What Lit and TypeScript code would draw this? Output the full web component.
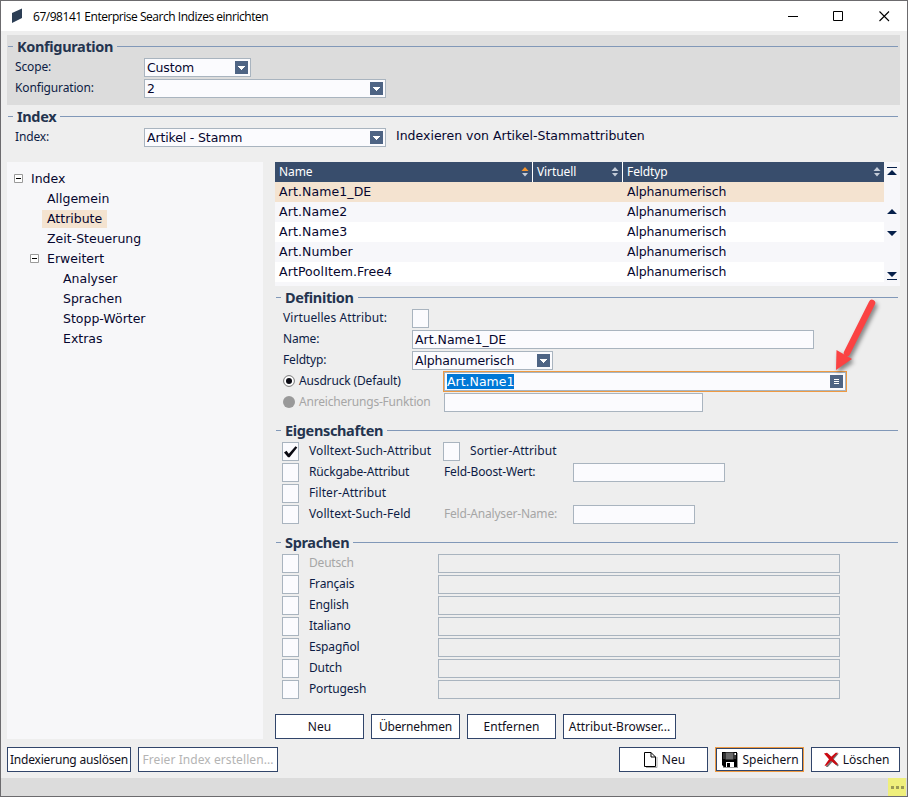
import { LitElement, html, css, svg, nothing } from "lit";
import { customElement, property } from "lit/decorators.js";
import { classMap } from "lit/directives/class-map.js";

const shared = css`
  * { box-sizing: border-box; }
  .label {
    font: 12px/19px "Noto Sans", "Open Sans", sans-serif;
    color: #0d1c45;
    white-space: nowrap;
    letter-spacing: -0.15px;
  }
  .loose { letter-spacing: 0.08px; }
  .off { color: #a6a6a6; letter-spacing: -0.2px; }
  .value {
    font: 12.5px/17px "DejaVu Sans", Verdana, sans-serif;
    color: #06062e;
    white-space: nowrap;
  }
`;

@customElement("group-heading")
class GroupHeading extends LitElement {
  @property() text = "";
  static styles = css`
    :host {
      display: flex;
      align-items: center;
      height: 23px;
      padding: 0 2px 0 1px;
      font: bold 14.5px/20px "Noto Sans", "Open Sans", sans-serif;
      letter-spacing: -0.35px;
      color: #24344f;
      white-space: nowrap;
    }
    .name { height: 20px; margin-bottom: 2px; }
    .dash { width: 5px; height: 1px; background: #8198b8; margin-right: 4px; }
    .rule { flex: 1; height: 1px; background: #8198b8; margin-left: 4px; }
  `;
  render() {
    return html`<span class="dash"></span><span class="name">${this.text}</span><span class="rule"></span>`;
  }
}

@customElement("check-box")
class CheckBox extends LitElement {
  @property({ type: Boolean }) checked = false;
  static styles = css`
    :host { display: block; box-sizing: border-box; width: 17px; height: 19px; border: 1px solid #a9b4bf; background: #fbfbfe; }
    svg { display: block; }
  `;
  render() {
    return this.checked
      ? html`<svg width="15" height="17" viewBox="0 0 15 17"><path d="M1 9.500 L3.500 7.800 L5.800 10.800 L12.500 3.200 L14.300 4.400 L6.600 14.200 L5 14.200 Z" fill="#0a0a12" /></svg>`
      : nothing;
  }
}

@customElement("text-field")
class TextField extends LitElement {
  @property() value = "";
  @property() icon = "";
  @property({ type: Boolean }) selected = false;
  static styles = [
    shared,
    css`
      :host {
        display: flex;
        box-sizing: border-box;
        height: 19px;
        border: 1px solid #a9b4bf;
        background: #fbfbfe;
        align-items: center;
        justify-content: space-between;
        padding: 0 2px;
      }
      :host([flat]) { background: #eee; }
      :host([focused]) { outline: 1px solid #ee9a42; }
      :host([icon="down"]) .value { letter-spacing: -0.14px; }
      .value { height: 17px; }
      .selected { background: #0078d7; color: #fff; line-height: 15px; height: 15px; }
      .knob { width: 13px; height: 13px; background: #4e6484; display: block; flex: none; }
    `,
  ];
  render() {
    const glyph =
      this.icon === "down"
        ? svg`<path d="M3 5h7v1h-1v1h-1v1h-1v1h-1v-1h-1v-1h-1v-1h-1z" fill="#fff" />`
        : svg`<path d="M4 4h5v1h-5zM4 6h5v1h-5zM4 8h5v1h-5z" fill="#fff" />`;
    return html`<span class=${classMap({ value: true, selected: this.selected })}>${this.value}</span>
      ${this.icon ? html`<svg class="knob" viewBox="0 0 13 13">${glyph}</svg>` : nothing}`;
  }
}

@customElement("push-button")
class PushButton extends LitElement {
  @property() icon = "";
  static styles = css`
    :host {
      display: flex;
      box-sizing: border-box;
      height: 25px;
      border: 1px solid #31456a;
      background: #fff;
      align-items: center;
      justify-content: center;
      font: 12px/23px "Noto Sans", "Open Sans", sans-serif;
      color: #10101c;
      white-space: nowrap;
    }
    :host([tight]) { letter-spacing: -0.2px; }
    :host([disabled]) { color: #b4b4b4; letter-spacing: 0.08px; }
    :host([primary]) { border-color: #ee9a42; box-shadow: inset 0 0 0 1px #31456a; }
    :host([icon]) { padding-left: 2px; }
    svg { flex: none; margin-right: 4px; }
  `;
  icons: Record<string, unknown> = {
    page: html`<svg width="14" height="17" viewBox="0 0 14 17"><path d="M2 16.5h11V6" fill="none" stroke="#aaa" /><path d="M.5 1.5h6.5l4.500 4.500v9.500h-11z" fill="#fff" stroke="#000" /><path d="M7 1.500v4.500h4.500" fill="none" stroke="#000" /></svg>`,
    disk: html`<svg width="16" height="17" viewBox="0 0 16 17"><path d="M1 2h15v15h-15z" fill="#999" /><path d="M0 1h15v15h-13l-2-2z" fill="#000" /><path d="M3.500 1.500h8v7h-8z" fill="#686868" /><path d="M1 2h2v6h-2zM12 2h2v6h-2z" fill="#333" /><path d="M12.500 2h1.500v2h-1.500z" fill="#fff" /><path d="M4 11h8v5h-8z" fill="#fff" /><path d="M5 12h3v4h-3z" fill="#000" /></svg>`,
    cross: html`<svg width="15" height="15" viewBox="0 0 15 15"><path d="M1 2l2-1 4.500 4 4.500-4 2 0-5 5.800 5 5.700-1 1.500-5.500-4.500-4.500 5-2 0 4.500-6.500z" fill="#777" transform="translate(.8 .5)" /><path d="M0 1.500l3-.8 4.200 4 4.500-4h2.300l-5.200 5.800 5 5.500-1.600 1-5.200-4.300-4.500 5h-2l4.500-6.500z" fill="#cc0a12" /></svg>`,
  };
  render() {
    return html`${this.icon ? this.icons[this.icon] : nothing}<span><slot></slot></span>`;
  }
}

@customElement("index-tree")
class IndexTree extends LitElement {
  items = [
    { text: "Index", depth: 0, open: true },
    { text: "Allgemein", depth: 1 },
    { text: "Attribute", depth: 1, active: true },
    { text: "Zeit-Steuerung", depth: 1 },
    { text: "Erweitert", depth: 1, open: true },
    { text: "Analyser", depth: 2 },
    { text: "Sprachen", depth: 2 },
    { text: "Stopp-Wörter", depth: 2 },
    { text: "Extras", depth: 2 },
  ];
  static styles = [
    shared,
    css`
      :host { display: block; background: #f7f7f9; padding: 7px 0 0 7px; }
      .row { display: flex; align-items: center; height: 20px; }
      .d1 { padding-left: 16px; }
      .d2 { padding-left: 32px; }
      .toggle { width: 9px; height: 9px; margin: 0 3px 1px 0; flex: none; }
      .value { padding: 0 5px; line-height: 18px; }
      .active { background: #f4e3d0; }
    `,
  ];
  render() {
    return this.items.map(
      (i) => html`<div class="row d${i.depth}">
        <svg class="toggle" viewBox="0 0 9 9">
          ${i.open ? svg`<path d="M.5.5h8v8h-8z" fill="#fff" stroke="#9a9a9a" /><path d="M2 4h5v1h-5z" fill="#000" />` : nothing}
        </svg>
        <span class=${classMap({ value: true, active: !!i.active })}>${i.text}</span>
      </div>`,
    );
  }
}

@customElement("attribute-table")
class AttributeTable extends LitElement {
  names = ["Art.Name1_DE", "Art.Name2", "Art.Name3", "Art.Number", "ArtPoolItem.Free4"];
  static styles = [
    shared,
    css`
      :host { display: flex; height: 124px; background: #f7f7fa; }
      .table { width: 609px; }
      .head, .row { display: grid; grid-template-columns: 257px 90px 262px; height: 20px; }
      .head { background: #384d6c; }
      .cell {
        display: flex;
        align-items: center;
        justify-content: space-between;
        padding: 0 3px 0 4px;
        font: 12px/20px "Noto Sans", "Open Sans", sans-serif;
        letter-spacing: -0.1px;
        color: #fff;
      }
      .cell + .cell { border-left: 1px solid #fff; }
      .row .value { line-height: 19px; padding-left: 4px; letter-spacing: 0.1px; }
      .row .type { padding-left: 5px; letter-spacing: -0.14px; }
      .row:nth-child(even) { background: #f4e3d0; }
      .row:nth-child(n + 3) { background: #f7f7fa; }
      .row:nth-child(2n + 4) { background: #fff; }
      .scroll { width: 16px; display: flex; flex-direction: column; align-items: center; }
      .scroll svg { display: block; }
    `,
  ];
  sorter(active = false) {
    return html`<svg width="8" height="10" viewBox="0 0 8 10">
      <path d="M.5 4L4 0l3.500 4z" fill=${active ? "#f7962e" : "#c4ccd8"} /><path d="M1 6h6l-3 3.500z" fill="#c4ccd8" />
    </svg>`;
  }
  render() {
    return html`<div class="table">
        <div class="head">
          <div class="cell"><span>Name</span>${this.sorter(true)}</div>
          <div class="cell"><span>Virtuell</span>${this.sorter()}</div>
          <div class="cell"><span>Feldtyp</span>${this.sorter()}</div>
        </div>
        ${this.names.map(
          (n) => html`<div class="row"><span class="value">${n}</span><span></span><span class="value type">Alphanumerisch</span></div>`,
        )}
      </div>
      <div class="scroll">
        <svg width="16" height="124" viewBox="0 0 16 124" fill="#06204a">
          <path d="M3 5h10v1H3zM8 8l5 5H3zM8 47l5 5H3zM3 69h10l-5 5zM3 110h10l-5 5zM3 117h10v1H3z" />
        </svg>
      </div>`;
  }
}

@customElement("app-root")
class AppRoot extends LitElement {
  static styles = [
    shared,
    css`
      :host { display: block; width: 908px; height: 797px; }
      .window { position: relative; display: flex; flex-direction: column; width: 908px; height: 797px; border: 1px solid #6c6b6e; background: #eee; overflow: hidden; }
      .title { display: flex; align-items: center; height: 30px; background: #fff; padding: 0 17px 0 11px; }
      .title .name { flex: 1; margin-left: 10px; font: 12px/29px "Open Sans", "Noto Sans", sans-serif; color: #000; letter-spacing: -0.47px; }
      .controls { display: flex; gap: 35px; }
      .config { margin: 4px 7px 0 6px; height: 70px; background: #dcdcdc; }
      .index { margin: 0 7px 0 6px; height: 57px; }
      .form { display: grid; row-gap: 2px; grid-auto-rows: 19px; }
      .top { grid-template-columns: 129px auto 1fr; padding-left: 8px; justify-items: start; }
      .note { margin-left: 10px; line-height: 15px; }
      .w107 { width: 107px; } .w122 { width: 122px; } .w141 { width: 141px; } .w152 { width: 152px; }
      .w242 { width: 242px; } .w259 { width: 259px; } .w402 { width: 402px; }
      .panes { display: flex; gap: 12px; margin: 0 7px 0 6px; height: 577px; }
      index-tree { width: 256px; }
      .detail { width: 625px; display: flex; flex-direction: column; }
      .def { grid-template-columns: 129px 32px 1fr; padding-left: 8px; }
      .wide { grid-column: 2 / 4; }
      .pair { grid-column: 1 / 3; display: flex; align-items: center; gap: 4px; height: 17px; }
      .radio { width: 12px; height: 12px; flex: none; }
      .gap { margin-top: 7px; }
      .props { grid-template-columns: 27px 134px 27px 103px 1fr; padding-left: 7px; }
      .s2 { grid-column: 3 / 5; padding-left: 1px; }
      .langs { grid-template-columns: 27px 129px 402px; padding-left: 7px; }
      .label { line-height: 18px; }
      .actions { display: flex; gap: 7px; margin-top: auto; }
      .b89 { width: 89px; } .b113 { width: 113px; } .b124 { width: 124px; } .b140 { width: 140px; }
      .bottom { display: flex; gap: 7px; margin: 8px 7px 6px 6px; }
      .spacer { flex: 1; }
      .status { display: flex; justify-content: flex-end; height: 18px; background: #dcdcdc; padding-right: 1px; }
      .badge { width: 18px; height: 18px; background: #efef7b; display: flex; align-items: center; justify-content: center; gap: 2px; }
      .dot { width: 3px; height: 3px; background: #9b9a55; }
      .arrow { position: absolute; left: 824px; top: 290px; filter: drop-shadow(2px 3px 2px rgba(0, 0, 0, 0.45)); }
    `,
  ];
  langs = ["Deutsch", "Français", "English", "Italiano", "Espagñol", "Dutch", "Portugesh"];

  render() {
    return html`<div class="window">
      <div class="title">
        <svg width="11" height="16" viewBox="0 0 11 16"><path d="M0 5L10 .5V10L0 15z" fill="#2c3e55" /></svg>
        <span class="name">67/98141 Enterprise Search Indizes einrichten</span>
        <div class="controls">
          <svg width="11" height="11" viewBox="0 0 11 11"><path d="M1 5h10v1H1z" /></svg>
          <svg width="11" height="11" viewBox="0 0 11 11"><path d="M.5.5h9v9h-9z" fill="none" stroke="#000" /></svg>
          <svg width="11" height="11" viewBox="0 0 11 11"><path d="M.5.5l9.500 9.500M10 .5L.5 10" stroke="#000" stroke-width="1.100" /></svg>
        </div>
      </div>

      <div class="config">
        <group-heading text="Konfiguration"></group-heading>
        <div class="form top">
          <span class="label">Scope:</span><text-field class="w107" value="Custom" icon="down"></text-field><span></span>
          <span class="label">Konfiguration:</span><text-field class="w242" value="2" icon="down"></text-field>
        </div>
      </div>

      <div class="index">
        <group-heading text="Index"></group-heading>
        <div class="form top">
          <span class="label">Index:</span><text-field class="w242" value="Artikel - Stamm" icon="down"></text-field>
          <span class="value note">Indexieren von Artikel-Stammattributen</span>
        </div>
      </div>

      <div class="panes">
        <index-tree></index-tree>
        <div class="detail">
          <attribute-table></attribute-table>
          <group-heading text="Definition"></group-heading>
          <div class="form def">
            <span class="label loose">Virtuelles Attribut:</span><check-box></check-box><span></span>
            <span class="label">Name:</span><text-field class="wide w402" value="Art.Name1_DE"></text-field>
            <span class="label">Feldtyp:</span><text-field class="wide w141" value="Alphanumerisch" icon="down"></text-field>
            <span class="pair">
              <svg class="radio" viewBox="0 0 12 12"><circle cx="6" cy="6" r="5.400" fill="#fff" stroke="#777" /><circle cx="6" cy="6" r="3" fill="#0b0b14" /></svg>
              <span class="label">Ausdruck (Default)</span></span>
            <text-field class="w402" value="Art.Name1" icon="menu" selected focused></text-field>
            <span class="pair">
              <svg class="radio" viewBox="0 0 12 12"><circle cx="6" cy="6" r="6" fill="#999" /></svg>
              <span class="label off">Anreicherungs-Funktion</span></span>
            <text-field class="w259"></text-field>
          </div>
          <group-heading class="gap" text="Eigenschaften"></group-heading>
          <div class="form props">
            <check-box checked></check-box><span class="label loose">Volltext-Such-Attribut</span><check-box></check-box><span class="label loose">Sortier-Attribut</span><span></span>
            <check-box></check-box><span class="label">Rückgabe-Attribut</span><span class="label s2">Feld-Boost-Wert:</span><text-field class="w152"></text-field>
            <check-box></check-box><span class="label loose">Filter-Attribut</span><span class="s2"></span><span></span>
            <check-box></check-box><span class="label loose">Volltext-Such-Feld</span><span class="label off s2">Feld-Analyser-Name:</span><text-field class="w122"></text-field>
          </div>
          <group-heading class="gap" text="Sprachen"></group-heading>
          <div class="form langs">
            ${this.langs.map(
              (l, i) => html`<check-box></check-box><span class=${classMap({ label: true, off: i === 0 })}>${l}</span><text-field flat></text-field>`,
            )}
          </div>
          <div class="actions">
            <push-button class="b89">Neu</push-button>
            <push-button class="b89" tight>Übernehmen</push-button>
            <push-button class="b89">Entfernen</push-button>
            <push-button class="b113">Attribut-Browser...</push-button>
          </div>
        </div>
      </div>

      <div class="bottom">
        <push-button class="b124" tight>Indexierung auslösen</push-button>
        <push-button class="b140" disabled>Freier Index erstellen...</push-button>
        <span class="spacer"></span>
        <push-button class="b89" icon="page">Neu</push-button>
        <push-button class="b89" icon="disk" primary>Speichern</push-button>
        <push-button class="b89" icon="cross">Löschen</push-button>
      </div>
      <div class="status"><div class="badge"><i class="dot"></i><i class="dot"></i><i class="dot"></i></div></div>

      <svg class="arrow" width="60" height="90" viewBox="0 0 60 90">
        <path d="M47 12L22 62" stroke="#fb4343" stroke-width="6.500" stroke-linecap="round" />
        <path d="M11 79L11.500 59L27 68z" fill="#fb4343" />
      </svg>
    </div>`;
  }
}
